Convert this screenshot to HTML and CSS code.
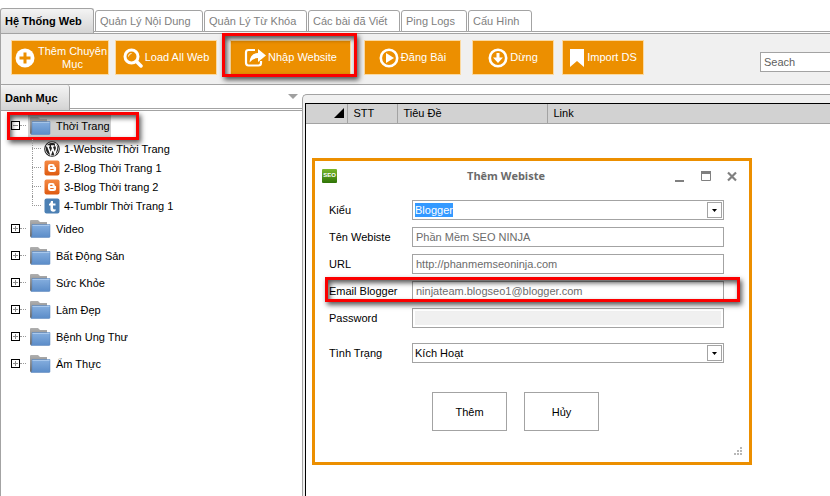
FILE: index.html
```html
<!DOCTYPE html>
<html lang="vi">
<head>
<meta charset="utf-8">
<title>SEO NINJA</title>
<link rel="stylesheet" href="styles.css">
</head>
<body>
<svg class="defs" aria-hidden="true">
  <defs>
    <linearGradient id="gBack" x1="0" y1="0" x2="0" y2="1"><stop offset="0" stop-color="#b0b0b0"/><stop offset="1" stop-color="#6c6c6c"/></linearGradient>
    <linearGradient id="gFront" x1="0" y1="0" x2="0" y2="1"><stop offset="0" stop-color="#86afdf"/><stop offset="1" stop-color="#5b8cc8"/></linearGradient>
    <linearGradient id="gBlog" x1="0" y1="0" x2="0" y2="1"><stop offset="0" stop-color="#f58a45"/><stop offset="1" stop-color="#de5a10"/></linearGradient>
    <symbol id="folder" viewBox="0 0 22 20">
      <path d="M1 2q0-1 1-1h7l2 2h7v3H4v12H2q-1 0-1-1z" fill="url(#gBack)"/>
      <path d="M3 5.500h18v12q0 1-1 1H2q1-1 1-3z" fill="url(#gFront)" stroke="#5580b8" stroke-width=".5"/>
      <path d="M3.500 6h17v1h-17z" fill="#a9c8ec"/>
    </symbol>
    <symbol id="blogger" viewBox="0 0 16 16">
      <rect x=".5" y=".5" width="15" height="15" rx="2" fill="url(#gBlog)"/>
      <path d="M6 4h2.500a2.300 2.300 0 0 1 2.200 2.300q0 .8.900.8.500.100.5.700V9.500A2.500 2.500 0 0 1 9.600 12H6.400A2.400 2.400 0 0 1 4 9.600V6A2 2 0 0 1 6 4z" fill="#fff"/>
      <path d="M6.700 6.400h1.300M6.700 9.500h2.500" stroke="#e8702a" stroke-width="1.200" stroke-linecap="round"/>
    </symbol>
    <symbol id="tumblr" viewBox="0 0 16 16">
      <rect x=".5" y=".5" width="15" height="15" rx="2" fill="#4c80b4"/>
      <path d="M7 3h2v2.500h2.500v2H9v2.600q0 1.400 1.200 1.400.7 0 1.300-.4v2q-1 .6-2.300.6Q6.500 13.700 6.500 11V7.500H5V6Q6.800 5.300 7 3z" fill="#fff"/>
    </symbol>
    <symbol id="wordpress" viewBox="0 0 16 16">
      <circle cx="8" cy="8" r="7.300" fill="#fff" stroke="#222" stroke-width="1.100"/>
      <circle cx="8" cy="8" r="6.200" fill="#222"/>
      <path d="M2.500 5h3.200M7 5h3.300M3.700 5l3 8L8.600 7.400M7.900 5l2.900 8 1.700-5.200Q13 6 11.800 4.600q-.6-1.300.8-1.400" fill="none" stroke="#fff" stroke-width="1.500"/>
    </symbol>
    <symbol id="plus" viewBox="0 0 9 9">
      <rect x=".5" y=".5" width="8" height="8" fill="#fff" stroke="#000"/>
      <path d="M2 4.500h5M4.500 2v5" stroke="#8a8a8a"/>
    </symbol>
    <symbol id="minus" viewBox="0 0 9 9">
      <rect x=".5" y=".5" width="8" height="8" fill="none" stroke="#000"/>
      <path d="M2 4.500h5" stroke="#8a8a8a"/>
    </symbol>
  </defs>
</svg>
<div class="app">
  <nav class="tabs">
    <a class="tab tab-main active" href="#">Hệ Thống Web</a>
    <a class="tab t1" href="#">Quản Lý Nội Dung</a>
    <a class="tab t2" href="#">Quản Lý Từ Khóa</a>
    <a class="tab t3" href="#">Các bài đã Viết</a>
    <a class="tab t4" href="#">Ping Logs</a>
    <a class="tab t5" href="#">Cấu Hình</a>
  </nav>
  <div class="toolbar">
    <button class="tool w1"><svg width="20" height="20" viewBox="0 0 20 20"><circle cx="10" cy="10" r="9.500" fill="#fff"/><path d="M10 4.500v11M4.500 10h11" stroke="#ec8f00" stroke-width="3"/></svg><span>Thêm Chuyên Mục</span></button>
    <button class="tool w2"><svg width="20" height="20" viewBox="0 0 20 20"><circle cx="8.500" cy="8.500" r="6.500" fill="none" stroke="#fff" stroke-width="3"/><path d="M13.500 13.500l4.500 4.500" stroke="#fff" stroke-width="3.500" stroke-linecap="round"/><path d="M5.500 8.500a3 3 0 0 1 3-3" fill="none" stroke="#fff"/></svg><span>Load All Web</span></button>
    <div class="marked mark-tool">
      <button class="tool w3"><svg width="22" height="20" viewBox="0 0 22 20"><path d="M11 2H4.500Q2 2 2 4.500v10Q2 17.500 4.500 17.500h10q2.500 0 2.500-2.500v-2" fill="none" stroke="#fff" stroke-width="2.200"/><path d="M14 1l8 6.500-8 6.500v-4q-5 0-8.500 4.500Q6 5.500 14 5z" fill="#fff"/></svg><span>Nhập Website</span></button>
    </div>
    <button class="tool w4"><svg width="20" height="20" viewBox="0 0 20 20"><circle cx="10" cy="10" r="8.200" fill="none" stroke="#fff" stroke-width="2.600"/><path d="M7 5l8 5-8 5z" fill="#fff"/></svg><span>Đăng Bài</span></button>
    <button class="tool w5"><svg width="20" height="20" viewBox="0 0 20 20"><circle cx="10" cy="10" r="8.200" fill="none" stroke="#fff" stroke-width="2.600"/><path d="M8.500 5h3v4.500H15l-5 5.500-5-5.500h3.500z" fill="#fff"/></svg><span>Dừng</span></button>
    <button class="tool w6"><svg width="16" height="20" viewBox="0 0 16 20"><path d="M1 1h14v18l-7-6-7 6z" fill="#fff"/></svg><span>Import DS</span></button>
    <input class="search" type="text" aria-label="Seach" placeholder="Seach">
  </div>
  <main class="main">
    <aside class="side">
      <div class="side-head">
        <a class="tab tab-side active" href="#">Danh Mục</a>
        <svg class="side-arrow" width="10" height="5" viewBox="0 0 10 5"><path d="M0 0h10L5 5z" fill="#a0a0a0"/></svg>
      </div>
      <ul class="tree">
        <li>
          <div class="node marked mark-node"><svg class="box"><use href="#minus"/></svg><i class="dots"></i><span class="selected"><svg class="folder"><use href="#folder"/></svg><span class="name">Thời Trang</span></span></div>
          <ul class="leaves">
            <li><svg class="ico"><use href="#wordpress"/></svg>1-Website Thời Trang</li>
            <li><svg class="ico"><use href="#blogger"/></svg>2-Blog Thời Trang 1</li>
            <li><svg class="ico"><use href="#blogger"/></svg>3-Blog Thời trang 2</li>
            <li><svg class="ico"><use href="#tumblr"/></svg>4-Tumblr Thời Trang 1</li>
          </ul>
        </li>
        <li class="node"><svg class="box"><use href="#plus"/></svg><i class="dots"></i><svg class="folder"><use href="#folder"/></svg><span class="name">Video</span></li>
        <li class="node"><svg class="box"><use href="#plus"/></svg><i class="dots"></i><svg class="folder"><use href="#folder"/></svg><span class="name">Bất Động Sản</span></li>
        <li class="node"><svg class="box"><use href="#plus"/></svg><i class="dots"></i><svg class="folder"><use href="#folder"/></svg><span class="name">Sức Khỏe</span></li>
        <li class="node"><svg class="box"><use href="#plus"/></svg><i class="dots"></i><svg class="folder"><use href="#folder"/></svg><span class="name">Làm Đẹp</span></li>
        <li class="node"><svg class="box"><use href="#plus"/></svg><i class="dots"></i><svg class="folder"><use href="#folder"/></svg><span class="name">Bệnh Ung Thư</span></li>
        <li class="node"><svg class="box"><use href="#plus"/></svg><i class="dots"></i><svg class="folder"><use href="#folder"/></svg><span class="name">Ẩm Thực</span></li>
      </ul>
    </aside>
    <section class="content">
      <div class="grid-box">
        <table class="grid">
          <thead><tr>
            <th class="c-sel"><svg width="10" height="10" viewBox="0 0 10 10"><path d="M10 0v10H0z" fill="#000"/></svg></th>
            <th class="c-stt">STT</th><th class="c-title">Tiêu Đề</th><th>Link</th>
          </tr></thead>
        </table>
      </div>
      <form class="dialog" role="dialog" aria-labelledby="dlg-title">
        <header class="dlg-head">
          <span class="logo">SEO</span>
          <h2 id="dlg-title">Thêm Webiste</h2>
          <button type="button" class="win" aria-label="Minimize"><svg width="10" height="11"><path d="M0 9h9v2H0z" fill="#808080"/></svg></button>
          <button type="button" class="win" aria-label="Maximize"><svg width="10" height="11"><path d="M.5.5h9v9h-9z" fill="none" stroke="#808080"/><path d="M0 0h10v3H0z" fill="#808080"/></svg></button>
          <button type="button" class="win" aria-label="Close"><svg width="10" height="11"><path d="M1 1.500l8 8M9 1.500l-8 8" stroke="#808080" stroke-width="2.200"/></svg></button>
        </header>
        <div class="field"><label for="kind">Kiểu</label>
          <div class="combo"><input id="kind" class="picked" type="text" value="Blogger"><button type="button" class="drop" aria-label="Mở"><svg width="5" height="3"><path d="M0 0h5L2.500 3z"/></svg></button></div></div>
        <div class="field"><label for="name">Tên Webiste</label><input id="name" class="box-in" type="text" value="Phần Mềm SEO NINJA"></div>
        <div class="field"><label for="url">URL</label><input id="url" class="box-in" type="text" value="http://phanmemseoninja.com"></div>
        <div class="field marked mark-field"><label for="email">Email Blogger</label><input id="email" class="box-in" type="text" value="ninjateam.blogseo1@blogger.com"></div>
        <div class="field"><label for="pass">Password</label><input id="pass" class="box-in off" type="password"></div>
        <div class="field last"><label for="state">Tình Trạng</label>
          <div class="combo"><select id="state"><option>Kích Hoạt</option></select><span class="drop"><svg width="5" height="3"><path d="M0 0h5L2.500 3z"/></svg></span></div></div>
        <div class="actions"><button type="button">Thêm</button><button type="button">Hủy</button></div>
        <svg class="grip" width="8" height="8"><path d="M6 0h2v2H6zM3 3h2v2H3zM6 3h2v2H6zM0 6h2v2H0zM3 6h2v2H3zM6 6h2v2H6z" fill="#b8b8b8"/></svg>
      </form>
    </section>
  </main>
</div>
</body>
</html>
```
FILE: styles.css
```css
*, *::before, *::after { box-sizing: border-box; }
body { margin: 0; background: #fff; color: #000; font: 11px/14px "Liberation Sans", Arial, sans-serif; }
button, input, select { font: inherit; margin: 0; padding: 0; border-radius: 0; }
ul { list-style: none; margin: 0; padding: 0; }
svg { flex: none; display: block; }
.defs { position: absolute; width: 0; height: 0; }

.app { display: flex; flex-direction: column; min-height: 100vh; overflow: hidden; }

.tabs { display: flex; align-items: flex-end; gap: 1px; height: 34px; padding-top: 8px; border-bottom: 1px solid #a3a3a3; background: linear-gradient(#a3a3a3, #a3a3a3) 0 31px / 100% 1px no-repeat; }
.tab { display: flex; align-items: center; padding-left: 4px; color: #808080; text-decoration: none; white-space: nowrap; border: 1px solid #a3a3a3; border-radius: 3px 3px 0 0; background: #fff; }
.tabs .tab { height: 22px; margin-bottom: 1px; }
.tab.active { color: #000; font-weight: bold; background: linear-gradient(#f4f4f4, #d4d4d4); border-bottom: 0; }
.tabs .tab-main { width: 94px; height: 25px; margin-bottom: 0; }
.t1 { width: 108px; }
.t2 { width: 103px; }
.t3 { width: 92px; }
.t4 { width: 66px; }
.t5 { width: 64px; }

.toolbar { display: flex; align-items: flex-start; height: 51px; padding: 6px 0 0 10px; background: #f0f0f0; border-bottom: 1px solid #a3a3a3; border-left: 1px solid #a3a3a3; }
.tool { display: flex; align-items: center; justify-content: center; gap: 2px; height: 35px; color: #fff; background: #ec8f00; border: 1px solid #fbd9a0; line-height: 13px; white-space: nowrap; }
.w1 { width: 98px; margin-right: 6px; padding-left: 3px; }
.w1 span { white-space: normal; }
.w2 { width: 102px; margin-right: 13px; }
.w3 { width: 121px; }
.w4 { width: 97px; margin-right: 11px; }
.w5 { width: 82px; margin-right: 8px; }
.w6 { width: 82px; margin-right: 116px; }
.search { flex: 1; min-width: 60px; height: 20px; margin-top: 12px; padding: 0 3px; border: 1px solid #a3a3a3; border-right: 0; background: #fff; }
.search::placeholder { color: #606060; opacity: 1; }

.marked { position: relative; }
.marked::after { content: ""; position: absolute; border: 3px solid #fb0000; pointer-events: none; box-shadow: 2px 3px 5px rgba(0,0,0,.65), inset 2px 3px 5px rgba(0,0,0,.65); }
.mark-tool { margin-right: 13px; }
.mark-tool::after { inset: -7px -6px -2px -8px; }
.mark-node::after { left: 6px; top: 0; width: 132px; height: 28px; }
.mark-field::after { inset: -4px -16px -1px -4px; }

.main { flex: 1; display: flex; }
.side { width: 302px; flex: none; border-left: 1px solid #a3a3a3; }
.side-head { display: flex; justify-content: space-between; height: 26px; padding-right: 4px; border-bottom: 1px solid #a3a3a3; background: linear-gradient(#a3a3a3, #a3a3a3) 0 23px / 100% 1px no-repeat; }
.tab-side { width: 69px; height: 25px; border-left: 0; border-top: 0; }
.side-arrow { margin-top: 9px; }
.tree { padding-top: 1px; }
.node { display: flex; align-items: center; height: 27px; padding-left: 10px; }
.box { width: 9px; height: 9px; }
.dots { width: 6px; height: 1px; margin-right: 2px; border-top: 1px dotted #999; }
.folder { width: 22px; height: 20px; margin-left: 1px; }
.name { margin-left: 5px; }
.selected { display: flex; align-items: center; height: 25px; padding-right: 1px; background: #cecece; }
.leaves { margin-left: 31px; }
.leaves li { position: relative; display: flex; align-items: center; height: 19px; }
.leaves li::before { content: ""; width: 9px; margin-right: 3px; border-top: 1px dotted #999; }
.leaves li::after { content: ""; position: absolute; left: 0; top: 0; height: 19px; border-left: 1px dotted #999; }
.leaves li:last-child::after { height: 10px; }
.ico { width: 16px; height: 16px; margin-right: 4px; }

.content { position: relative; flex: 1; display: flex; margin-top: 9px; padding: 8px 0 0 2px; background: #f0f0f0; border: 1px solid #a3a3a3; border-width: 1px 0 0 1px; border-radius: 5px 0 0 0; }
.grid-box { flex: 1; background: #fff; border: 1px solid #000; border-width: 1px 0 0 1px; }
.grid { width: 100%; border-collapse: collapse; table-layout: fixed; background: #d2d2d2; }
.grid th { height: 19px; padding: 0 6px; text-align: left; font-weight: normal; border-right: 1px solid #a3a3a3; border-bottom: 1px solid #a3a3a3; }
.grid th:last-child { border-right: 0; }
.grid .c-sel { width: 41px; padding-right: 3px; }
.c-sel svg { margin-left: auto; }
.c-stt { width: 50px; }
.c-title { width: 150px; }

.dialog { position: absolute; left: 9px; top: 63px; width: 440px; padding: 5px 25px 7px 14px; background: #fff; border: 3px solid #ec8f00; }
.dlg-head { display: flex; align-items: center; height: 20px; margin: 0 -13px 14px -7px; gap: 16px; }
.dlg-head h2 { flex: 1; margin: 0; text-align: center; color: #6a6a6a; font: bold 11px/16px "Open Sans", sans-serif; }
.logo { width: 15px; height: 14px; border-radius: 1px; color: #fff; font: bold 6px/13px "Liberation Sans", sans-serif; text-align: center; background: linear-gradient(#7ab82c, #2f7407); }
.win { border: 0; background: none; }
.field { display: flex; align-items: center; height: 20px; margin-bottom: 7px; }
.field label { width: 83px; flex: none; }
.box-in, .combo { flex: 1; min-width: 0; height: 20px; border: 1px solid #a3a3a3; background: #fff; }
.box-in { padding: 0 3px; color: #6b6b6b; }
.off { background: #f0f0f0; box-shadow: inset 0 0 0 2px #fff; }
.combo { position: relative; display: flex; align-items: center; padding: 1px 1px 1px 2px; }
.combo input { width: 38px; height: 14px; margin-right: auto; border: 0; }
.combo select { flex: 1; height: 16px; border: 0; background: none; appearance: none; color: #000; }
.combo .picked { color: #fff; background: #3399ff; }
.drop { display: flex; align-items: center; justify-content: center; width: 15px; height: 16px; border: 1px solid #a3a3a3; background: #fff; }
.field.last { margin-top: 15px; }
.actions { display: flex; gap: 17px; margin: 29px 0 16px 103px; }
.actions button { width: 75px; height: 39px; border: 1px solid #a3a3a3; background: #fff; color: #000; }
.grip { margin: 0 -18px 0 auto; }
```
